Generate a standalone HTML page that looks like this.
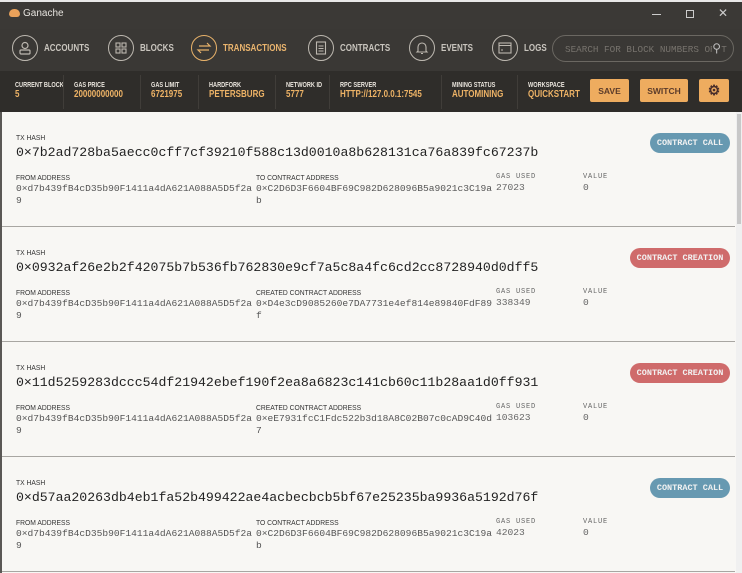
<!DOCTYPE html>
<html><head><meta charset="utf-8"><style>
*{margin:0;padding:0;box-sizing:border-box}
body{width:742px;height:573px;overflow:hidden;background:#f8f7f4;font-family:"Liberation Sans",sans-serif;position:relative}
.abs{position:absolute}
#title{left:0;top:0;width:742px;height:29px;background:#3b3936;border-top:2px solid #e8e8e8}
#nav{left:0;top:29px;width:742px;height:42px;background:#3a3835}
#stats{left:0;top:71px;width:742px;height:41px;background:#2f2d2a}
.navi{position:absolute;top:35px;height:26px;display:flex;align-items:center;color:#c9c5be;font-weight:bold;font-size:10px;white-space:nowrap}
.navi span{display:inline-block;transform:scaleX(0.8);transform-origin:left}
.circ{width:26px;height:26px;border:1.3px solid #bdb8b0;border-radius:50%;margin-right:6px;display:flex;align-items:center;justify-content:center;flex:none}
.act{color:#ebb56e}.act .circ{border-color:#e8b26a}
.lab{position:absolute;top:82px;font-size:7px;font-weight:bold;color:#e9e4dc;transform:scaleX(0.8);transform-origin:left;white-space:nowrap}
.val{position:absolute;top:89px;font-size:10px;font-weight:bold;color:#eeb366;transform:scaleX(0.8);transform-origin:left;white-space:nowrap}
.sep{position:absolute;top:75px;width:1px;height:34px;background:#403d39}
.btn{position:absolute;top:79px;height:23px;background:#eeac5f;border-radius:2px;color:#5b3b2a;font-size:8.5px;font-weight:bold;display:flex;align-items:center;justify-content:center}
.row{position:absolute;left:2px;width:733px;height:115px;border-bottom:1px solid #a8a6a2}
.small{position:absolute;font-size:7.5px;color:#333;transform:scaleX(0.9);transform-origin:left;white-space:nowrap}
.hash{position:absolute;left:14px;top:33px;font-size:13.2px;color:#222;font-family:"Liberation Mono",monospace}
.addr{position:absolute;font-family:"Liberation Mono",monospace;font-size:9.6px;color:#555;width:240px;word-break:break-all;line-height:12px}
.gl{position:absolute;font-family:"Liberation Mono",monospace;font-size:7px;color:#666;letter-spacing:0.8px}
.badge{position:absolute;top:21px;height:20px;border-radius:10px;color:#f2f2f2;font-family:"Liberation Mono",monospace;font-size:8.5px;font-weight:bold;display:flex;align-items:center;justify-content:center;white-space:nowrap}
.call{background:#6799b1;right:5px;width:80px}
.cre{background:#cf6b6b;right:5px;width:100px}
</style></head><body>
<div id="title" class="abs"></div>
<div class="abs" style="left:9px;top:9px;width:11px;height:8px;background:#e9a15a;border-radius:5px 5px 3px 3px"></div>
<div class="abs" style="left:23px;top:8px;font-size:10px;color:#e6e3de">Ganache</div>
<div class="abs" style="left:652px;top:14px;width:9px;height:1px;background:#ccc"></div>
<div class="abs" style="left:686px;top:10px;width:8px;height:8px;border:1px solid #ccc"></div>
<div class="abs" style="left:718px;top:6px;font-size:12px;color:#ccc">✕</div>
<div id="nav" class="abs"></div>
<div class="navi" style="left:12px"><div class="circ"><svg width="14" height="14" viewBox="0 0 14 14" fill="none" stroke="#bdb8b0" stroke-width="1.2"><circle cx="7" cy="4.5" r="3"/><rect x="2" y="9" width="10" height="4" rx="1"/></svg></div><span>ACCOUNTS</span></div>
<div class="navi" style="left:108px"><div class="circ"><svg width="12" height="12" viewBox="0 0 12 12" fill="none" stroke="#bdb8b0" stroke-width="1.1"><rect x="1" y="1" width="4" height="4"/><rect x="7" y="1" width="4" height="4"/><rect x="1" y="7" width="4" height="4"/><rect x="7" y="7" width="4" height="4"/></svg></div><span>BLOCKS</span></div>
<div class="navi act" style="left:191px"><div class="circ"><svg width="16" height="14" viewBox="0 0 16 14" fill="none" stroke="#e8b26a" stroke-width="1.2"><path d="M3 5h11l-3-3M13 9H2l3 3"/></svg></div><span>TRANSACTIONS</span></div>
<div class="navi" style="left:308px"><div class="circ"><svg width="12" height="14" viewBox="0 0 12 14" fill="none" stroke="#bdb8b0" stroke-width="1.1"><rect x="1.5" y="1" width="9" height="12"/><path d="M3.5 5h5M3.5 7.5h5M3.5 10h5"/></svg></div><span>CONTRACTS</span></div>
<div class="navi" style="left:409px"><div class="circ"><svg width="14" height="14" viewBox="0 0 14 14" fill="none" stroke="#bdb8b0" stroke-width="1.1"><path d="M3 10V6a4 4 0 0 1 8 0v4l1 1H2zM6 12.5h2"/></svg></div><span>EVENTS</span></div>
<div class="navi" style="left:492px"><div class="circ"><svg width="14" height="12" viewBox="0 0 14 12" fill="none" stroke="#bdb8b0" stroke-width="1.1"><rect x="1" y="1" width="12" height="10"/><path d="M1 3.5h12M3 8h2"/></svg></div><span>LOGS</span></div>
<div class="abs" style="left:552px;top:35px;width:182px;height:27px;border:1px solid #6b6862;border-radius:14px;color:#77736d;font-family:'Liberation Mono',monospace;font-size:9.3px;padding:8px 0 0 12px;white-space:nowrap;overflow:hidden">SEARCH FOR BLOCK NUMBERS OR T<span style="color:#bbb;font-size:12px;position:absolute;right:12px;top:5px;background:#3a3835">⚲</span></div>
<div id="stats" class="abs"></div>
<div class="lab" style="left:15px">CURRENT BLOCK</div><div class="val" style="left:15px">5</div>
<div class="sep" style="left:63px"></div>
<div class="lab" style="left:74px">GAS PRICE</div><div class="val" style="left:74px">20000000000</div>
<div class="sep" style="left:140px"></div>
<div class="lab" style="left:151px">GAS LIMIT</div><div class="val" style="left:151px">6721975</div>
<div class="sep" style="left:198px"></div>
<div class="lab" style="left:209px">HARDFORK</div><div class="val" style="left:209px">PETERSBURG</div>
<div class="sep" style="left:275px"></div>
<div class="lab" style="left:286px">NETWORK ID</div><div class="val" style="left:286px">5777</div>
<div class="sep" style="left:329px"></div>
<div class="lab" style="left:340px">RPC SERVER</div><div class="val" style="left:340px">HTTP://127.0.0.1:7545</div>
<div class="sep" style="left:441px"></div>
<div class="lab" style="left:452px">MINING STATUS</div><div class="val" style="left:452px">AUTOMINING</div>
<div class="sep" style="left:517px"></div>
<div class="lab" style="left:528px">WORKSPACE</div><div class="val" style="left:528px">QUICKSTART</div>
<div class="btn" style="left:590px;width:39px">SAVE</div>
<div class="btn" style="left:640px;width:48px">SWITCH</div>
<div class="btn" style="left:699px;width:30px;font-size:14px;color:#4a2e2a">⚙</div>
<div class="abs" style="left:0;top:112px;width:2px;height:461px;background:#5a5855"></div>
<div class="abs" style="left:736px;top:112px;width:6px;height:461px;background:#f0f0f0"></div>
<div class="abs" style="left:737px;top:114px;width:4px;height:110px;background:#c8c8c8"></div>

<div class="row" style="top:112px">
<div class="small" style="left:14px;top:21px">TX HASH</div>
<div class="hash">0×7b2ad728ba5aecc0cff7cf39210f588c13d0010a8b628131ca76a839fc67237b</div>
<div class="small" style="left:14px;top:61px">FROM ADDRESS</div>
<div class="addr" style="left:14px;top:71px">0×d7b439fB4cD35b90F1411a4dA621A088A5D5f2a9</div>
<div class="small" style="left:254px;top:61px">TO CONTRACT ADDRESS</div>
<div class="addr" style="left:254px;top:71px">0×C2D6D3F6604BF69C982D628096B5a9021c3C19ab</div>
<div class="gl" style="left:494px;top:61px">GAS USED</div><div class="addr" style="left:494px;top:70px;color:#666">27023</div>
<div class="gl" style="left:581px;top:61px">VALUE</div><div class="addr" style="left:581px;top:70px;color:#666">0</div>
<div class="badge call">CONTRACT CALL</div>
</div>
<div class="row" style="top:227px">
<div class="small" style="left:14px;top:21px">TX HASH</div>
<div class="hash">0×0932af26e2b2f42075b7b536fb762830e9cf7a5c8a4fc6cd2cc8728940d0dff5</div>
<div class="small" style="left:14px;top:61px">FROM ADDRESS</div>
<div class="addr" style="left:14px;top:71px">0×d7b439fB4cD35b90F1411a4dA621A088A5D5f2a9</div>
<div class="small" style="left:254px;top:61px">CREATED CONTRACT ADDRESS</div>
<div class="addr" style="left:254px;top:71px">0×D4e3cD9085260e7DA7731e4ef814e89840FdF89f</div>
<div class="gl" style="left:494px;top:61px">GAS USED</div><div class="addr" style="left:494px;top:70px;color:#666">338349</div>
<div class="gl" style="left:581px;top:61px">VALUE</div><div class="addr" style="left:581px;top:70px;color:#666">0</div>
<div class="badge cre">CONTRACT CREATION</div>
</div>
<div class="row" style="top:342px">
<div class="small" style="left:14px;top:21px">TX HASH</div>
<div class="hash">0×11d5259283dccc54df21942ebef190f2ea8a6823c141cb60c11b28aa1d0ff931</div>
<div class="small" style="left:14px;top:61px">FROM ADDRESS</div>
<div class="addr" style="left:14px;top:71px">0×d7b439fB4cD35b90F1411a4dA621A088A5D5f2a9</div>
<div class="small" style="left:254px;top:61px">CREATED CONTRACT ADDRESS</div>
<div class="addr" style="left:254px;top:71px">0×eE7931fcC1Fdc522b3d18A8C02B07c0cAD9C40d7</div>
<div class="gl" style="left:494px;top:61px">GAS USED</div><div class="addr" style="left:494px;top:70px;color:#666">103623</div>
<div class="gl" style="left:581px;top:61px">VALUE</div><div class="addr" style="left:581px;top:70px;color:#666">0</div>
<div class="badge cre">CONTRACT CREATION</div>
</div>
<div class="row" style="top:457px">
<div class="small" style="left:14px;top:21px">TX HASH</div>
<div class="hash">0×d57aa20263db4eb1fa52b499422ae4acbecbcb5bf67e25235ba9936a5192d76f</div>
<div class="small" style="left:14px;top:61px">FROM ADDRESS</div>
<div class="addr" style="left:14px;top:71px">0×d7b439fB4cD35b90F1411a4dA621A088A5D5f2a9</div>
<div class="small" style="left:254px;top:61px">TO CONTRACT ADDRESS</div>
<div class="addr" style="left:254px;top:71px">0×C2D6D3F6604BF69C982D628096B5a9021c3C19ab</div>
<div class="gl" style="left:494px;top:61px">GAS USED</div><div class="addr" style="left:494px;top:70px;color:#666">42023</div>
<div class="gl" style="left:581px;top:61px">VALUE</div><div class="addr" style="left:581px;top:70px;color:#666">0</div>
<div class="badge call">CONTRACT CALL</div>
</div>
</body></html>
